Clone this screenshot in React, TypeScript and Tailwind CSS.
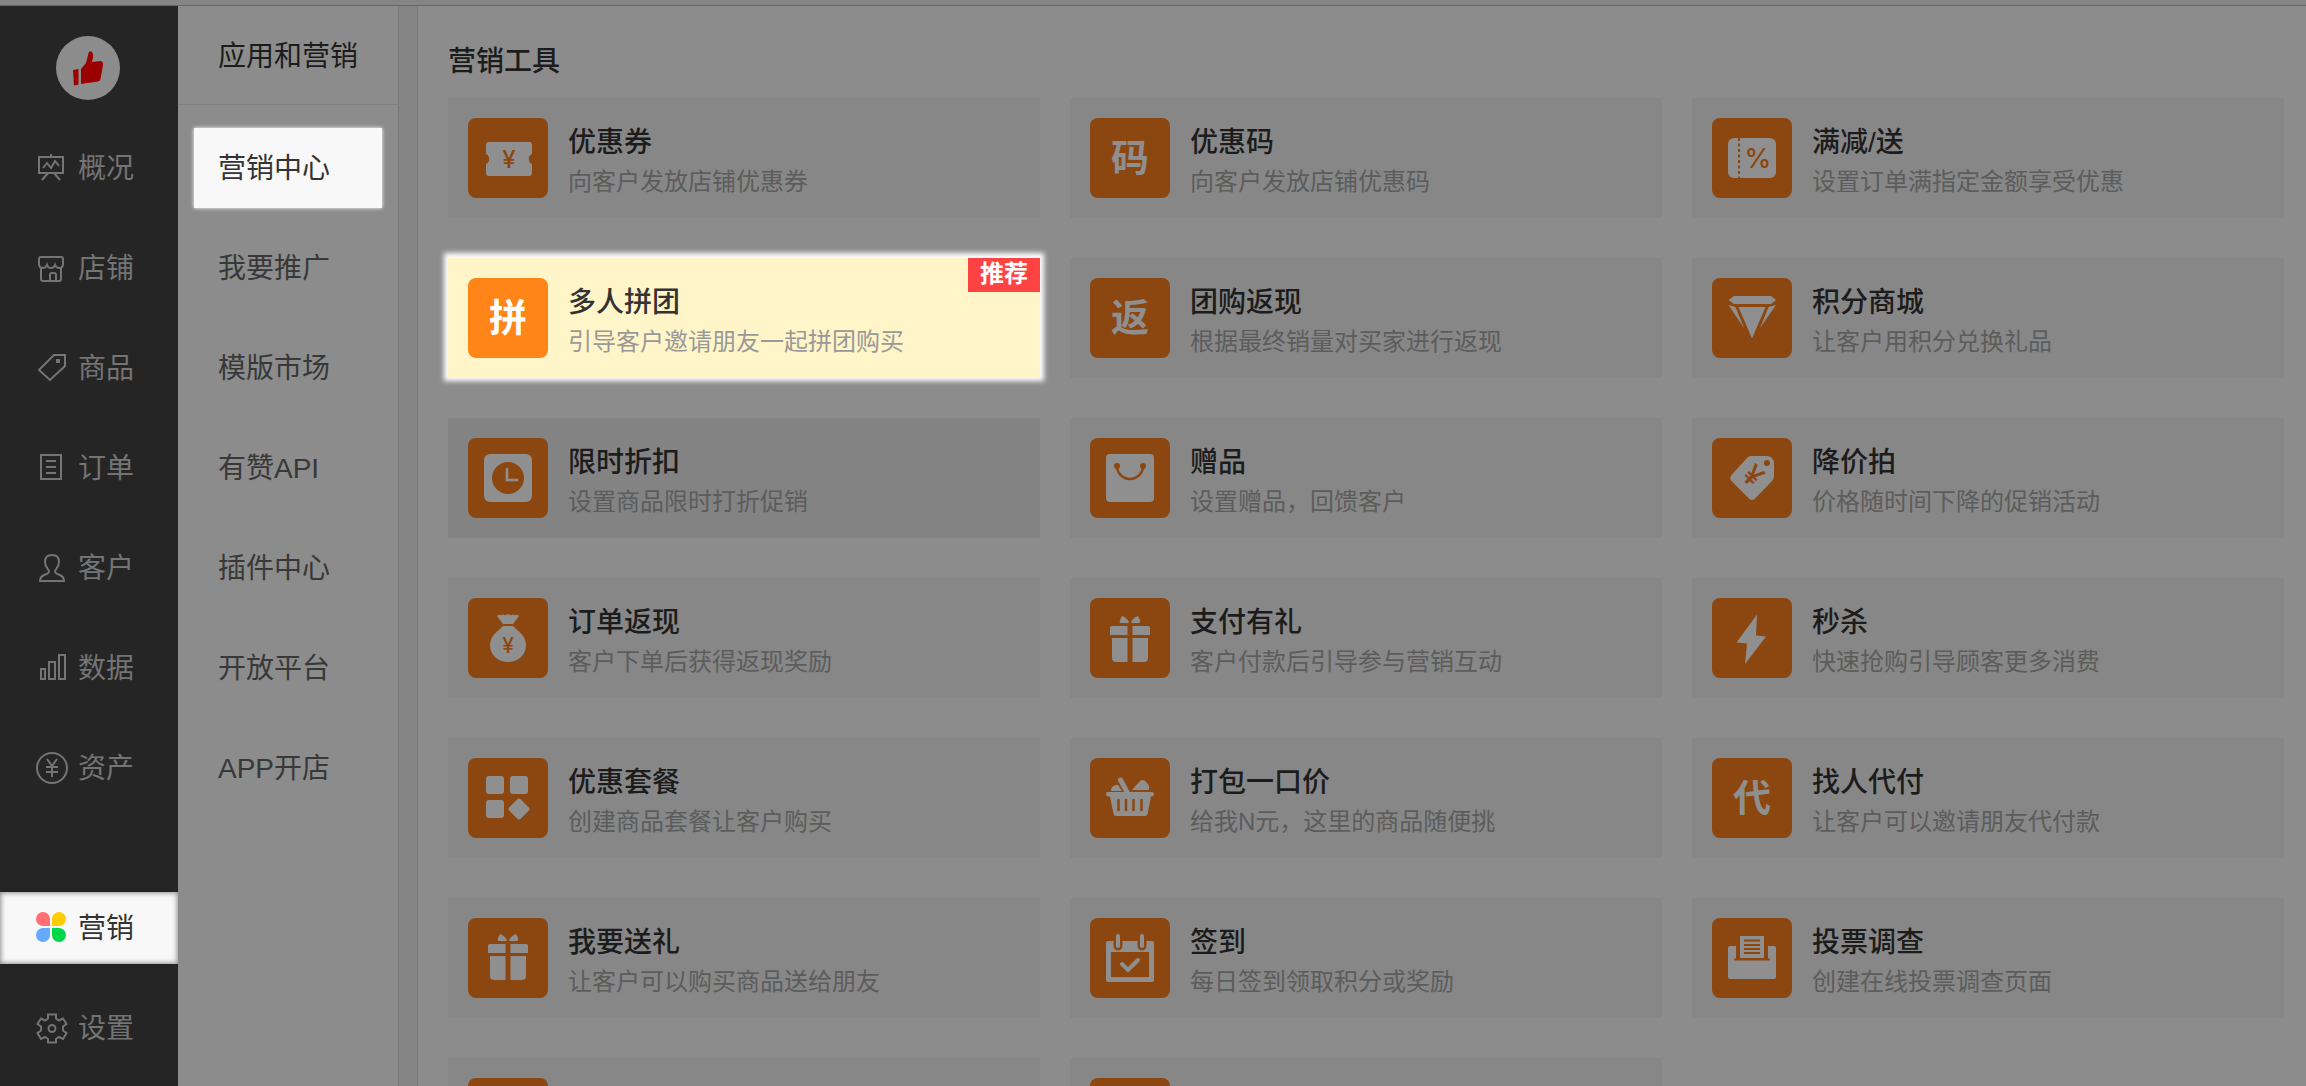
import React from 'react'

const Yen = ({ x, y, size, turn = 0 }: { x: number; y: number; size: number; turn?: number }) => (
  <text
    x={x}
    y={y}
    fontSize={size}
    textAnchor="middle"
    transform={turn ? `rotate(${turn} ${x} ${y - size * 0.35})` : undefined}
    className="fill-[#8c4710] font-['Inter',sans-serif] font-medium"
  >
    ¥
  </text>
)

const GiftShape = () => (
  <g>
    <path d="M38 25H31Q29 25 30 22L32 18Q36 19 39 24Z" />
    <path d="M42 25H48Q51 25 50 22L48 18Q44 19 41 24Z" />
    <path d="M22 28H37.500V37H20V30Q20 28 22 28Z" />
    <path d="M42.500 28H58Q60 28 60 30V37H42.500Z" />
    <path d="M22 40H37.500V64H26Q22 64 22 60Z" />
    <path d="M42.500 40H58V60Q58 64 54 64H42.500Z" />
  </g>
)

const icons: Record<string, React.ReactNode> = {
  coupon: (
    <>
      <path d="M21 24H61Q64 24 64 27V36A5.500 5.500 0 0 0 64 46V55Q64 58 61 58H21Q18 58 18 55V46A5.500 5.500 0 0 0 18 36V27Q18 24 21 24Z" />
      <Yen x={41} y={50} size={24} />
    </>
  ),
  discount: (
    <>
      <rect x="16" y="20" width="48" height="40" rx="6" />
      <path d="M27 20V60" className="stroke-[#8c4710]" strokeWidth="2" strokeDasharray="3 2.500" />
      <text x="46" y="50" fontSize="27" textAnchor="middle" className="fill-[#8c4710] font-['Inter',sans-serif] font-medium">
        %
      </text>
    </>
  ),
  diamond: (
    <>
      <path d="M16.500 22L22 18H59L64 22L59 26H22Z" />
      <path d="M26.500 29H53.500L40 60.500Z" />
      <path d="M16.500 27L23.500 29L32 50Z" />
      <path d="M64 27L56.500 29L48 50Z" />
    </>
  ),
  clock: (
    <>
      <rect x="16" y="16" width="48" height="48" rx="6" />
      <circle cx="40" cy="40" r="16" className="fill-[#8c4710]" />
      <path d="M39 31V42H49" fill="none" stroke="currentColor" strokeWidth="2.500" strokeLinecap="round" />
    </>
  ),
  bag: (
    <>
      <rect x="16" y="16" width="48" height="48" rx="4" />
      <circle cx="27" cy="28" r="3" className="fill-[#8c4710]" />
      <circle cx="53" cy="28" r="3" className="fill-[#8c4710]" />
      <path d="M27 28A13 13 0 0 0 53 28" fill="none" className="stroke-[#8c4710]" strokeWidth="2.500" />
    </>
  ),
  tag: (
    <>
      <path d="M39 18H54Q62 18 62 26V38Q62 41 60 43L43 60.500Q40 63.500 37 60.500L19.500 43Q17 40 19.500 37L35 20Q37 18 39 18Z" />
      <circle cx="55" cy="25" r="3" className="fill-[#8c4710]" />
      <Yen x={41} y={48} size={29} turn={45} />
    </>
  ),
  moneybag: (
    <>
      <path d="M29 18Q31 16 33 17.500Q35 15.500 37 17.500Q40 15 43 17.500Q45 15.500 47 17.500Q49 16 51 18L45 26H35Z" />
      <path d="M35 28H45L53.500 36Q58 41 58 47C58 57 50 64 40 64S22 57 22 47Q22 41 26.500 36Z" />
      <Yen x={40} y={55} size={21} />
    </>
  ),
  gift: <GiftShape />,
  present: (
    <g transform="translate(0 -2)">
      <GiftShape />
    </g>
  ),
  bolt: <path d="M45 16.500L44 37.500L54 38.500L33 66L35 45.500L24.500 44.500Z" />,
  blocks: (
    <>
      <rect x="18" y="18" width="18" height="18" rx="3" />
      <rect x="42" y="18" width="18" height="18" rx="3" />
      <rect x="18" y="42" width="18" height="18" rx="3" />
      <rect x="43" y="43" width="16" height="16" rx="2" transform="rotate(45 51 51)" />
    </>
  ),
  basket: (
    <>
      <path d="M18 34H62Q64 34 64 36T62 38.500H61L57.500 56Q57 58 55 58H26Q24 58 23.500 56L20 38.500H18Q16 38.500 16 36T18 34Z" />
      <path d="M28.500 41V53M36 41V53M43.500 41V53M51.500 41V53" className="stroke-[#8c4710]" strokeWidth="2.500" />
      <path d="M30.500 22L37 34" stroke="currentColor" strokeWidth="5" strokeLinecap="round" />
      <path d="M21 33Q21 28 26 27H28L32 33Z" />
      <path d="M42 32L50 23Q54 20 57 25Q60 28 59 32Z" />
    </>
  ),
  calendar: (
    <>
      <rect x="16" y="23" width="48" height="41" rx="2" />
      <path d="M28 17V28M52 17V28" className="stroke-[#8c4710]" strokeWidth="9" strokeLinecap="round" />
      <path d="M28 18V28M52 18V28" stroke="currentColor" strokeWidth="4" strokeLinecap="round" />
      <rect x="21" y="34" width="38" height="25" className="fill-[#8c4710]" />
      <path d="M32 46L38 52L48 42" fill="none" stroke="currentColor" strokeWidth="4" strokeLinecap="round" />
    </>
  ),
  vote: (
    <>
      <path d="M18 28H62Q64 28 64 30V59Q64 61 62 61H18Q16 61 16 59V30Q16 28 18 28Z" />
      <path d="M25 26H55V41H25ZM23 41.500H57" className="fill-[#8c4710] stroke-[#8c4710]" strokeWidth="2" strokeLinecap="round" />
      <rect x="28" y="18" width="24" height="22" />
      <path d="M32 22.500H48M32 27H48M32 31H48M32 35H48" className="stroke-[#8c4710]" strokeWidth="2" />
    </>
  ),
}

const tools = [
  { title: '优惠券', desc: '向客户发放店铺优惠券', icon: 'coupon' },
  { title: '优惠码', desc: '向客户发放店铺优惠码', mark: '码' },
  { title: '满减/送', desc: '设置订单满指定金额享受优惠', icon: 'discount' },
  { title: '多人拼团', desc: '引导客户邀请朋友一起拼团购买', mark: '拼', active: true },
  { title: '团购返现', desc: '根据最终销量对买家进行返现', mark: '返' },
  { title: '积分商城', desc: '让客户用积分兑换礼品', icon: 'diamond' },
  { title: '限时折扣', desc: '设置商品限时打折促销', icon: 'clock', hover: true },
  { title: '赠品', desc: '设置赠品，回馈客户', icon: 'bag' },
  { title: '降价拍', desc: '价格随时间下降的促销活动', icon: 'tag' },
  { title: '订单返现', desc: '客户下单后获得返现奖励', icon: 'moneybag' },
  { title: '支付有礼', desc: '客户付款后引导参与营销互动', icon: 'gift' },
  { title: '秒杀', desc: '快速抢购引导顾客更多消费', icon: 'bolt' },
  { title: '优惠套餐', desc: '创建商品套餐让客户购买', icon: 'blocks' },
  { title: '打包一口价', desc: '给我N元，这里的商品随便挑', icon: 'basket' },
  { title: '找人代付', desc: '让客户可以邀请朋友代付款', mark: '代' },
  { title: '我要送礼', desc: '让客户可以购买商品送给朋友', icon: 'present' },
  { title: '签到', desc: '每日签到领取积分或奖励', icon: 'calendar' },
  { title: '投票调查', desc: '创建在线投票调查页面', icon: 'vote' },
  {},
  {},
]

type Tool = { title?: string; desc?: string; icon?: string; mark?: string; active?: boolean; hover?: boolean }

const ToolCard = ({ title, desc, icon, mark, active, hover }: Tool) => {
  const bg = active
    ? 'bg-[#fff5c8] shadow-[0_-1px_5px_4px_#ffffff]'
    : hover
      ? 'bg-[#838383]'
      : 'bg-[#878787]'
  return (
    <a href="#" className={`relative flex h-[120px] items-center gap-5 px-5 ${bg}`}>
      <div
        className={`flex size-20 shrink-0 items-center justify-center rounded-lg text-[38px] font-bold ${
          active ? 'bg-[#ff8518] text-white' : 'bg-[#8c4710] text-[#8f8f8f]'
        }`}
      >
        {mark}
        {icon && (
          <svg viewBox="0 0 80 80" className="size-20" fill="currentColor">
            {icons[icon]}
          </svg>
        )}
      </div>
      <div className="pt-2">
        <h3 className={`text-[28px] leading-10 font-medium ${active ? 'text-[#333333]' : 'text-[#1c1c1c]'}`}>{title}</h3>
        <p className={`text-2xl leading-[38px] ${active ? 'text-[#999999]' : 'text-[#5c5c5c]'}`}>{desc}</p>
      </div>
      {active && (
        <span className="absolute top-0 right-0 bg-[#ff4343] px-3 pb-0.5 text-2xl leading-8 font-bold text-white">推荐</span>
      )}
    </a>
  )
}

const menu = [
  {
    label: '概况',
    icon: <path d="M3 5H27V21H3ZM15 2V5M12 21L6 28M18 21L24 28M7 16L11 11L15 16L19 9L23 14" />,
  },
  {
    label: '店铺',
    icon: (
      <path d="M5 5H25Q27 5 27 7V12Q27 16 23.500 16Q20 16 19 13Q18 16 15 16T11 13Q10 16 6.500 16Q3 16 3 12V7Q3 5 5 5ZM5 16V27Q5 29 7 29H23Q25 29 25 27V16M14 29V23Q14 21 16 21H18Q20 21 20 23V29" />
    ),
  },
  {
    label: '商品',
    icon: <path d="M3 18L18 3H29V14L14 28ZM21 8H23V10H21Z" />,
  },
  { label: '订单', icon: <path d="M5 3H25V27H5ZM10 9H20M10 15H20M10 21H20" /> },
  {
    label: '客户',
    icon: (
      <path d="M16 3C11 3 9 6 9 10C9 14 11 16 12.500 18C14 21 11 22 8 23Q4 25 4 29H28Q28 25 24 23C21 22 18 21 19.500 18C21 16 23 14 23 10C23 6 21 3 16 3Z" />
    ),
  },
  { label: '数据', icon: <path d="M5 17H9V27H5ZM13 10H19V27H13ZM23 3H29V27H23Z" /> },
  {
    label: '资产',
    icon: (
      <>
        <circle cx="16" cy="16" r="15" />
        <path d="M11 7L16 14L21 7M16 14V25M10 15H22M10 20H22" />
      </>
    ),
  },
  {
    label: '营销',
    active: true,
    icon: (
      <g stroke="none">
        <path d="M7 0A7 7 0 0 0 7 14H14V7A7 7 0 0 0 7 0Z" fill="#ff6f74" />
        <path d="M23 0A7 7 0 0 1 23 14H16V7A7 7 0 0 1 23 0Z" fill="#ffcc00" />
        <path d="M7 30A7 7 0 0 1 7 16H14V23A7 7 0 0 1 7 30Z" fill="#65a9ff" />
        <path d="M23 30A7 7 0 0 0 23 16H16V23A7 7 0 0 0 23 30Z" fill="#00d649" />
      </g>
    ),
  },
  {
    label: '设置',
    icon: (
      <>
        <path d="M12 2.500H20V6.500L23 8.500L27 6.500L30.500 12L27 14.500V18.500L30.500 21L27 27L23 25L20 27V30.500H12V27L9 25L5 27L1.500 21L5 18.500V14.500L1.500 12L5 6.500L9 8.500L12 6.500Z" />
        <circle cx="16" cy="16.500" r="3.500" />
      </>
    ),
  },
]

const subMenu = ['营销中心', '我要推广', '模版市场', '有赞API', '插件中心', '开放平台', 'APP开店']

const Sidebar = () => (
  <nav className="flex w-[178px] shrink-0 flex-col bg-[#252525] pt-[30px]">
    <div className="mb-8 ml-14 flex size-16 shrink-0 items-center justify-center rounded-full bg-[#8c8c8c]">
      <svg viewBox="0 0 64 64" className="size-16 fill-[#9b0000]">
        <path d="M17 34L22.500 33V48.500L18 49.500Z" />
        <path d="M25 33L30 27L32.500 17Q33.500 14 36 16Q37.500 18 37 22L36 26L45 25Q47.500 26 47 29L44.500 43Q44 45 42 45.500L25 48Z" />
      </svg>
    </div>
    <div className="flex flex-col gap-7">
      {menu.map(({ label, icon, active }) => (
        <a
          key={label}
          href="#"
          className={`flex h-[72px] items-center gap-2.5 pl-9 text-[28px] ${
            active
              ? 'mt-[60px] bg-[#f8f8f8] text-[#333333] shadow-[inset_0_0_5px_1px_#8c8c8c]'
              : 'text-[#747474]'
          }`}
        >
          <svg viewBox="0 0 32 32" className="size-8" fill="none" stroke="currentColor" strokeWidth="2">
            {icon}
          </svg>
          <span className="pt-0.5">{label}</span>
        </a>
      ))}
    </div>
  </nav>
)

const SubMenu = () => (
  <aside className="w-[220px] shrink-0 bg-[#8c8c8c]">
    <h1 className="flex h-[99px] items-center border-b border-[#808080] pt-1 pl-10 text-[28px] text-[#1c1c1c]">应用和营销</h1>
    <nav className="mx-4 mt-[23px] flex flex-col gap-5">
      {subMenu.map((name, i) => (
        <a
          key={name}
          href="#"
          className={`flex h-20 items-center pt-0.5 pl-6 text-[28px] ${
            i === 0 ? 'bg-[#f8f8f8] text-[#333333] shadow-[0_0_4px_#ffffff]' : 'text-[#383838]'
          }`}
        >
          {name}
        </a>
      ))}
    </nav>
  </aside>
)

const App = () => {
  return (
    <div className="flex h-screen flex-col overflow-hidden bg-[#8c8c8c] font-['Liberation_Sans','Noto_Sans_CJK_SC',sans-serif]">
      <div className="h-1.5 shrink-0 border-b border-[#666666] bg-[#858585]" />
      <div className="flex min-h-0 grow">
        <Sidebar />
        <SubMenu />
        <div className="w-5 shrink-0 border-x border-[#7a7a7a] bg-[#848484]" />
        <main className="grow pt-9 pr-[22px] pl-[30px]">
          <h2 className="mb-4 text-[28px] leading-10 font-medium text-[#1c1c1c]">营销工具</h2>
          <div className="grid grid-cols-3 gap-x-[30px] gap-y-10">
            {tools.map((tool, i) => (
              <ToolCard key={i} {...tool} />
            ))}
          </div>
        </main>
      </div>
    </div>
  )
}

export default App
